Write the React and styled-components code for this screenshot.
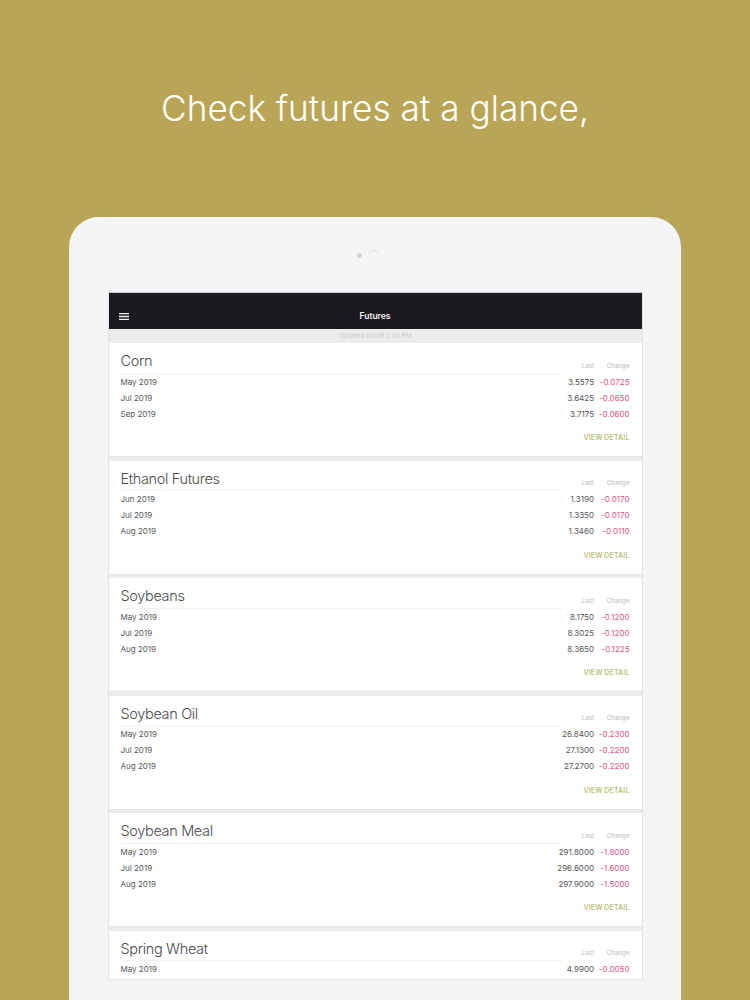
import styled, { createGlobalStyle } from "styled-components";

const GlobalStyle = createGlobalStyle`
  html, body {
    margin: 0;
    padding: 0;
    background: #b8a656;
    font-family: "Inter", "Liberation Sans", sans-serif;
  }
`;

const Page = styled.div`
  width: 750px;
  height: 1000px;
  overflow: hidden;
  background: #b8a656;
  display: flex;
  flex-direction: column;
  align-items: center;
`;

const Headline = styled.h1`
  margin: 0;
  padding-top: 85px;
  height: 217px;
  flex-shrink: 0;
  box-sizing: border-box;
  font-size: 35.2px;
  line-height: 46px;
  font-weight: 300;
  color: #fff;
  white-space: nowrap;
`;

const Tablet = styled.div`
  width: 612px;
  height: 783px;
  flex-shrink: 0;
  box-sizing: border-box;
  padding: 0 39px;
  background: #f5f5f7;
  border-radius: 30px 30px 0 0;
  display: flex;
  flex-direction: column;
  align-items: center;
`;

const CameraRow = styled.div`
  height: 75px;
  flex-shrink: 0;
  width: 100%;
  display: flex;
  justify-content: center;
  align-items: flex-start;
  gap: 6px;
  padding-top: 33px;
  padding-right: 14px;
  box-sizing: border-box;
`;

const Sensor = styled.span`
  width: 5px;
  height: 5px;
  margin-top: 3px;
  border-radius: 50%;
  background: #d6d6da;
`;

const Lens = styled.span`
  width: 11px;
  height: 11px;
  border-radius: 50%;
  border-top: 1px solid #d8d8dc;
  box-sizing: border-box;
`;

const Screen = styled.div`
  width: 535px;
  height: 688px;
  flex-shrink: 0;
  box-sizing: border-box;
  overflow: hidden;
  background: #ececee;
  border: 1px solid #e2e2e5;
  border-top-color: #c9c9cc;
  display: flex;
  flex-direction: column;
`;

const Toolbar = styled.div`
  height: 36px;
  flex-shrink: 0;
  background: #1c1a1e;
  position: relative;
  display: flex;
  align-items: flex-end;
  justify-content: center;
  padding-bottom: 7px;
  box-sizing: border-box;
`;

const MenuButton = styled.svg`
  position: absolute;
  left: 10px;
  bottom: 9px;
  width: 10px;
  height: 7px;
`;

const ToolbarTitle = styled.span`
  color: #f4f4f4;
  font-size: 8.5px;
  line-height: 11px;
  font-weight: 600;
`;

const Updated = styled.div`
  height: 14px;
  flex-shrink: 0;
  text-align: center;
  font-size: 6.4px;
  line-height: 14px;
  color: #c8c8cb;
`;

const CardList = styled.div`
  display: flex;
  flex-direction: column;
  gap: 3.6px;
`;

const Card = styled.section`
  height: 114px;
  flex-shrink: 0;
  background: #fff;
  box-sizing: border-box;
  padding: 0 12px;
  border-bottom: 1px solid #e4e4e6;
`;

const CardHead = styled.div`
  height: 30.5px;
  display: flex;
  justify-content: space-between;
  align-items: flex-end;
`;

const CardTitle = styled.h2`
  margin: 0;
  width: 442px;
  height: 30.5px;
  box-sizing: border-box;
  padding-top: 8px;
  border-bottom: 1px solid #f1f1f3;
  font-size: 14.5px;
  line-height: 20px;
  letter-spacing: -0.35px;
  font-weight: 300;
  color: #4a4a4e;
`;

const Row = styled.div`
  height: 16px;
  display: grid;
  grid-template-columns: 1fr 40px 35.5px;
  align-items: center;
  font-size: 8px;
  color: #555558;
`;

const HeadLabels = styled(Row)`
  width: 66px;
  grid-template-columns: 30.5px 35.5px;
  font-size: 6.2px;
  color: #b8b8bc;
  height: 12px;
  margin-bottom: 2.5px;
`;

const Num = styled.span`
  text-align: right;
  white-space: nowrap;
`;

const Change = styled(Num)`
  color: #e2557f;
`;

const Footer = styled.div`
  margin-top: 10.5px;
  text-align: right;
  font-size: 6.9px;
  line-height: 12px;
  font-weight: 600;
  letter-spacing: 0.2px;
  color: #b9bf78;
`;

const markets = [
  { name: "Corn", rows: [["May 2019", "3.5575", "-0.0725"], ["Jul 2019", "3.6425", "-0.0650"], ["Sep 2019", "3.7175", "-0.0600"]] },
  { name: "Ethanol Futures", rows: [["Jun 2019", "1.3190", "-0.0170"], ["Jul 2019", "1.3350", "-0.0170"], ["Aug 2019", "1.3460", "-0.0110"]] },
  { name: "Soybeans", rows: [["May 2019", "8.1750", "-0.1200"], ["Jul 2019", "8.3025", "-0.1200"], ["Aug 2019", "8.3650", "-0.1225"]] },
  { name: "Soybean Oil", rows: [["May 2019", "26.8400", "-0.2300"], ["Jul 2019", "27.1300", "-0.2200"], ["Aug 2019", "27.2700", "-0.2200"]] },
  { name: "Soybean Meal", rows: [["May 2019", "291.8000", "-1.8000"], ["Jul 2019", "296.6000", "-1.6000"], ["Aug 2019", "297.9000", "-1.5000"]] },
  { name: "Spring Wheat", rows: [["May 2019", "4.9900", "-0.0050"]] },
];

function MarketCard({ market }) {
  return (
    <Card>
      <CardHead>
        <CardTitle>{market.name}</CardTitle>
        <HeadLabels>
          <Num>Last</Num>
          <Num>Change</Num>
        </HeadLabels>
      </CardHead>
      {market.rows.map(([month, last, change]) => (
        <Row key={month}>
          <span>{month}</span>
          <Num>{last}</Num>
          <Change>{change}</Change>
        </Row>
      ))}
      {/* the last card runs off the screen before its footer */}
      {market.rows.length > 1 && <Footer>VIEW DETAIL</Footer>}
    </Card>
  );
}

export default function App() {
  return (
    <Page>
      <GlobalStyle />
      <Headline>Check futures at a glance,</Headline>
      <Tablet>
        <CameraRow>
          <Sensor />
          <Lens />
        </CameraRow>
        <Screen>
          <Toolbar>
            <MenuButton viewBox="0 0 10 7">
              <path d="M0 0.7h10M0 3.5h10M0 6.3h10" stroke="#f0f0f0" strokeWidth="1.3" fill="none" />
            </MenuButton>
            <ToolbarTitle>Futures</ToolbarTitle>
          </Toolbar>
          <Updated>Updated 05/08 2:50 PM</Updated>
          <CardList>
            {markets.map((m) => (
              <MarketCard key={m.name} market={m} />
            ))}
          </CardList>
        </Screen>
      </Tablet>
    </Page>
  );
}
